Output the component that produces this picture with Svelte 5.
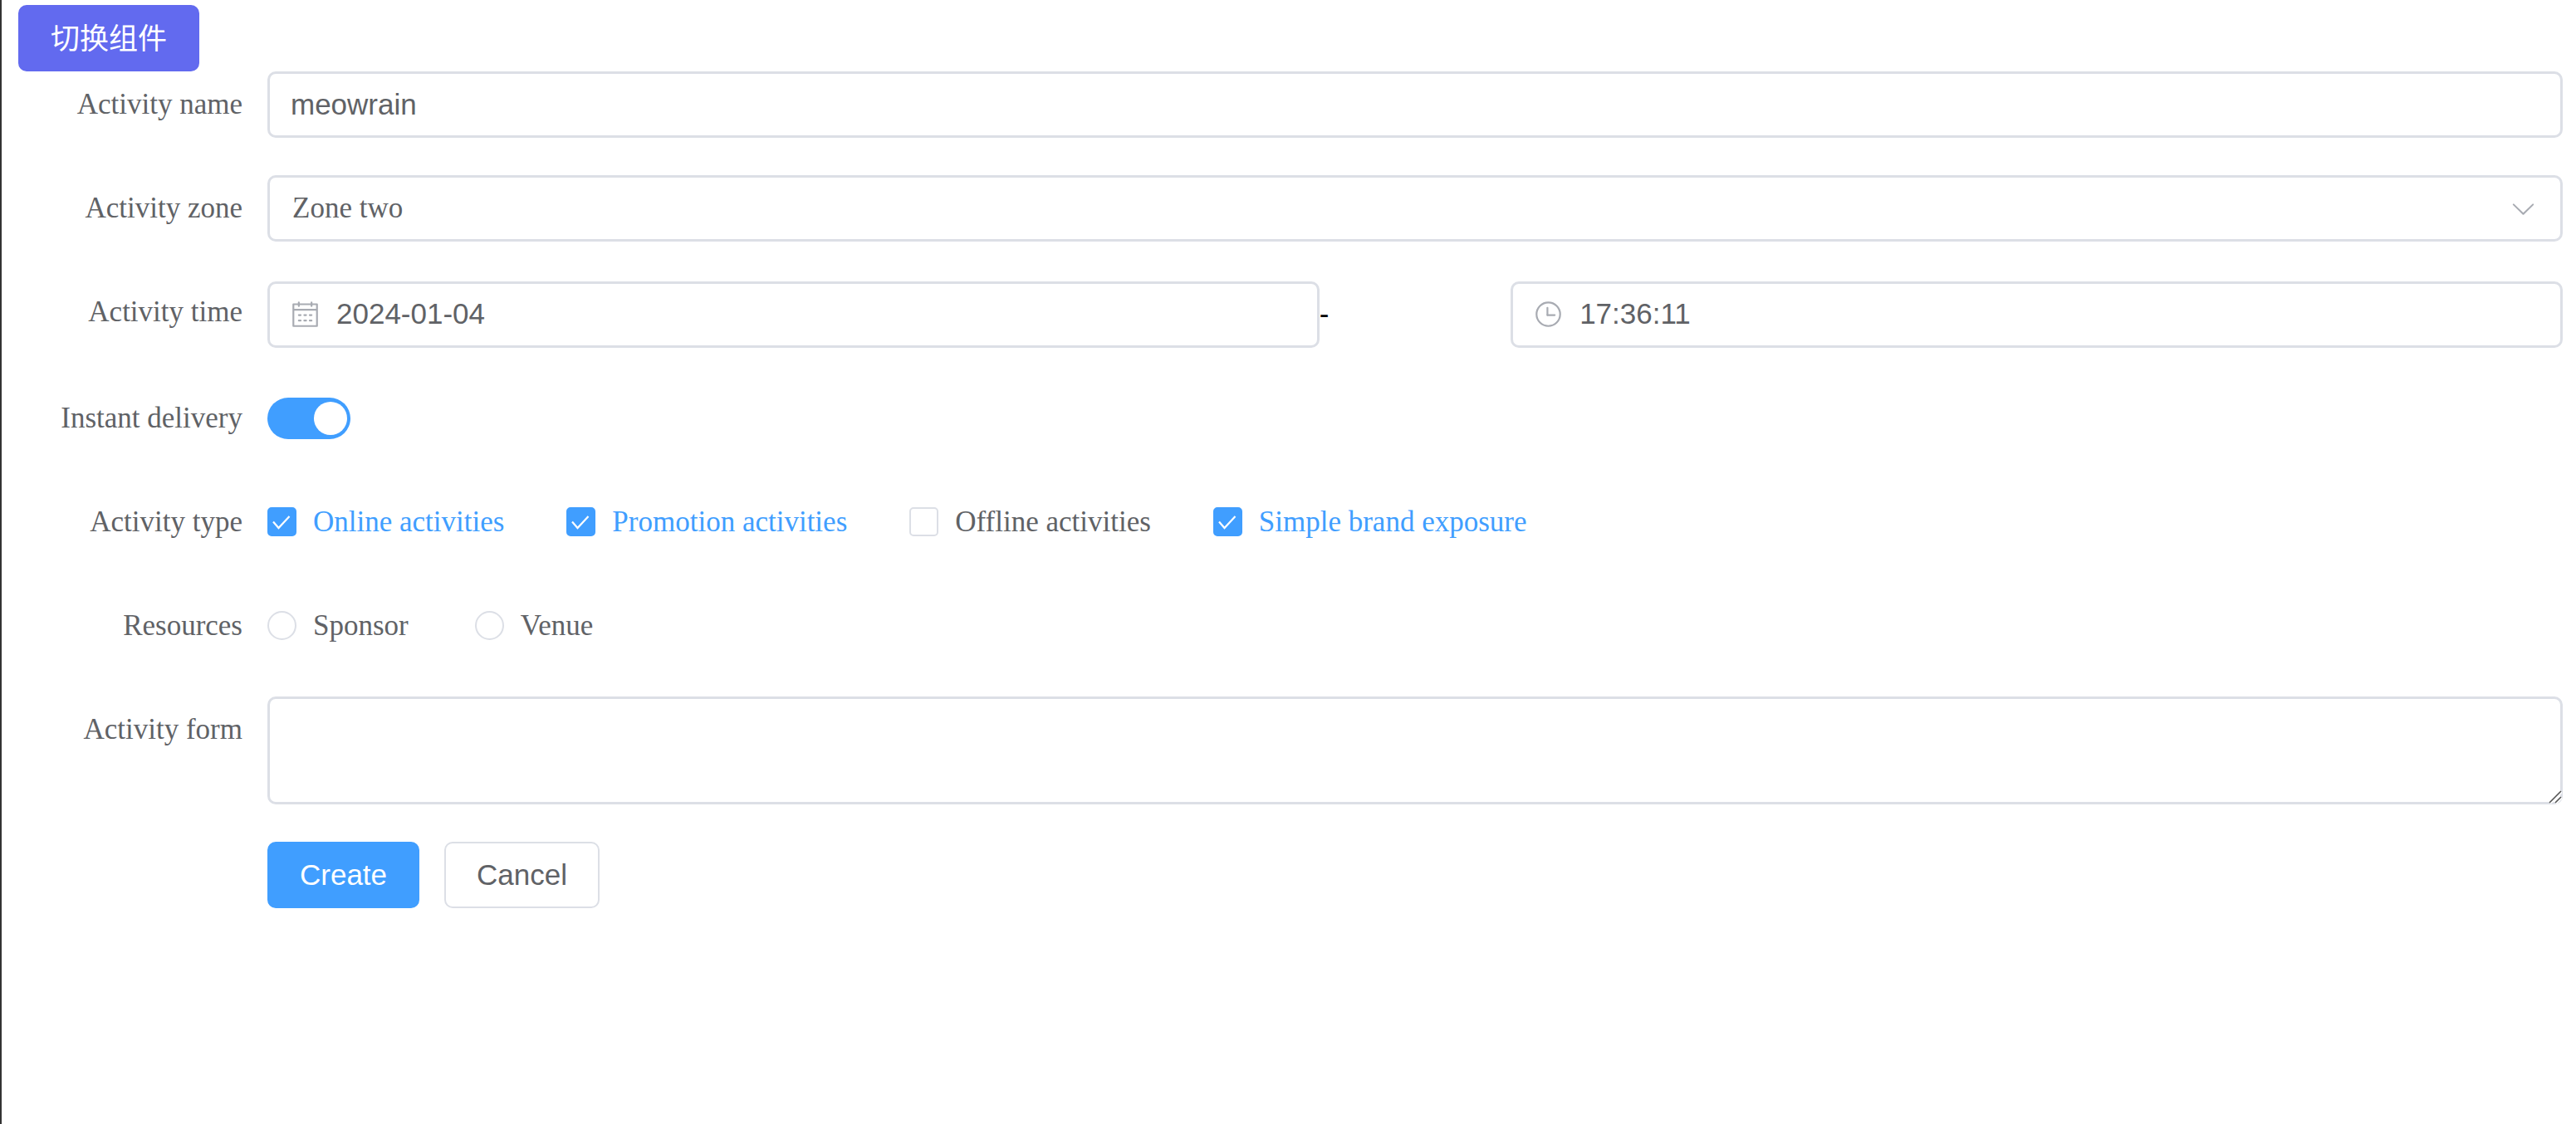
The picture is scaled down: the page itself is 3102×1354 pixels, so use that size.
<script>
  let name = $state('meowrain');
  let zone = $state('two');
  let date = $state('2024-01-04');
  let time = $state('17:36:11');
  let instant = $state(true);
  let resource = $state('');
  let description = $state('');
  let types = $state([
    { label: 'Online activities', checked: true },
    { label: 'Promotion activities', checked: true },
    { label: 'Offline activities', checked: false },
    { label: 'Simple brand exposure', checked: true },
  ]);
  const resources = ['Sponsor', 'Venue'];
</script>

<main class="page">
  <div class="toolbar">
    <button type="button" class="btn switcher">切换组件</button>
  </div>

  <form class="form" onsubmit={(e) => e.preventDefault()}>
    <div class="item">
      <label class="label" for="name">Activity name</label>
      <div class="box">
        <input id="name" class="text" type="text" bind:value={name} />
      </div>
    </div>

    <div class="item">
      <label class="label" for="zone">Activity zone</label>
      <div class="box">
        <select id="zone" class="text select" bind:value={zone}>
          <option value="one">Zone one</option>
          <option value="two">Zone two</option>
        </select>
        <svg class="icon arrow" viewBox="0 0 1024 1024" aria-hidden="true">
          <path d="M831.872 340.864 512 652.672 192.128 340.864a30.592 30.592 0 0 0-42.752 0 29.12 29.12 0 0 0 0 41.6L489.664 714.24a32 32 0 0 0 44.672 0l340.288-331.712a29.12 29.12 0 0 0 0-41.728 30.592 30.592 0 0 0-42.752 0z" />
        </svg>
      </div>
    </div>

    <div class="item">
      <label class="label" for="date">Activity time</label>
      <div class="range">
        <div class="box">
          <svg class="icon" viewBox="0 0 1024 1024" aria-hidden="true">
            <path d="M128 384v512h768V192H768v32a32 32 0 1 1-64 0v-32H320v32a32 32 0 0 1-64 0v-32H128v128h768v64zm192-256h384V96a32 32 0 1 1 64 0v32h160a32 32 0 0 1 32 32v768a32 32 0 0 1-32 32H96a32 32 0 0 1-32-32V160a32 32 0 0 1 32-32h160V96a32 32 0 0 1 64 0zm-32 384h64a32 32 0 0 1 0 64h-64a32 32 0 0 1 0-64m0 192h64a32 32 0 1 1 0 64h-64a32 32 0 1 1 0-64m192-192h64a32 32 0 0 1 0 64h-64a32 32 0 0 1 0-64m0 192h64a32 32 0 1 1 0 64h-64a32 32 0 1 1 0-64m192-192h64a32 32 0 1 1 0 64h-64a32 32 0 1 1 0-64m0 192h64a32 32 0 1 1 0 64h-64a32 32 0 1 1 0-64" />
          </svg>
          <input id="date" class="text" type="text" bind:value={date} />
        </div>
        <span class="dash">-</span>
        <div class="box">
          <svg class="icon" viewBox="0 0 1024 1024" aria-hidden="true">
            <path d="M512 896a384 384 0 1 0 0-768 384 384 0 0 0 0 768m0 64a448 448 0 1 1 0-896 448 448 0 0 1 0 896" />
            <path d="M480 256a32 32 0 0 1 32 32v256a32 32 0 0 1-64 0V288a32 32 0 0 1 32-32" />
            <path d="M480 512h256q32 0 32 32t-32 32H480q-32 0-32-32t32-32" />
          </svg>
          <input class="text" type="text" aria-label="Time" bind:value={time} />
        </div>
      </div>
    </div>

    <div class="item">
      <label class="label" for="instant">Instant delivery</label>
      <div class="line">
        <input id="instant" class="switch" type="checkbox" role="switch" bind:checked={instant} />
      </div>
    </div>

    <div class="item" role="group" aria-labelledby="type-label">
      <span class="label" id="type-label">Activity type</span>
      <div class="line checks">
        {#each types as type}
          <label class="option" class:on={type.checked}>
            <span class="tick">
              <input class="check" type="checkbox" bind:checked={type.checked} />
              {#if type.checked}
                <svg class="mark" viewBox="0 0 35 35" aria-hidden="true">
                  <path d="M7 17.5 13.5 25 26.5 11" />
                </svg>
              {/if}
            </span>
            {type.label}
          </label>
        {/each}
      </div>
    </div>

    <div class="item" role="radiogroup" aria-labelledby="resource-label">
      <span class="label" id="resource-label">Resources</span>
      <div class="line radios">
        {#each resources as item}
          <label class="option">
            <span class="tick">
              <input class="radio" type="radio" name="resource" value={item} bind:group={resource} />
            </span>
            {item}
          </label>
        {/each}
      </div>
    </div>

    <div class="item">
      <label class="label" for="description">Activity form</label>
      <div class="area">
        <textarea id="description" bind:value={description}></textarea>
        <svg class="grip" viewBox="0 0 16 16" aria-hidden="true">
          <path class="halo" d="M1 15 15 1M8 15 15 8" />
          <path d="M1 15 15 1M8 15 15 8" />
        </svg>
      </div>
    </div>

    <div class="actions">
      <button type="submit" class="btn primary">Create</button>
      <button type="button" class="btn">Cancel</button>
    </div>
  </form>
</main>

<style>
  :global(body) {
    margin: 0;
    background: #fff;
  }

  .page {
    box-sizing: border-box;
    min-height: 100vh;
    padding: 6px 16px 0 20px;
    border-left: 2px solid #333;
    color: #606266;
    font: 35px/80px 'Liberation Serif', 'Noto Sans CJK SC', serif;
  }

  .toolbar {
    display: flex;
  }

  .btn {
    box-sizing: border-box;
    height: 80px;
    padding: 0 37px 2px;
    border: 2px solid #dcdfe6;
    border-radius: 10px;
    background: #fff;
    color: #606266;
    font: 35px/1 'Liberation Sans', 'Noto Sans CJK SC', sans-serif;
    cursor: pointer;
  }

  .switcher {
    padding-bottom: 0;
    border-color: #626aef;
    background: #626aef;
    color: #fff;
  }

  .primary {
    border-color: #409eff;
    background: #409eff;
    color: #fff;
  }

  .form {
    display: flex;
    flex-direction: column;
    gap: 45px;
  }

  .item {
    display: grid;
    grid-template-columns: 270px minmax(0, 1fr);
    column-gap: 30px;
    align-items: start;
  }

  .label {
    text-align: right;
    white-space: nowrap;
  }

  .box {
    box-sizing: border-box;
    display: flex;
    align-items: center;
    gap: 20px;
    height: 80px;
    padding: 0 25px;
    border: 3px solid #dcdfe6;
    border-radius: 10px;
    background: #fff;
  }

  .text {
    flex: 1;
    min-width: 0;
    height: 72px;
    padding: 0;
    border: 0;
    outline: 0;
    background: transparent;
    color: #606266;
    font: 35px/72px 'Liberation Sans', sans-serif;
  }

  .select {
    padding-left: 2px;
    appearance: none;
    font-family: 'Liberation Serif', serif;
  }

  .icon {
    flex: none;
    width: 35px;
    height: 35px;
    fill: #a8abb2;
  }

  .arrow {
    margin-right: 2px;
    pointer-events: none;
  }

  .range {
    display: grid;
    grid-template-columns: 11fr 2fr 11fr;
    padding-top: 3px;
  }

  .range .box {
    padding-bottom: 2px;
  }

  .dash {
    color: #000;
    font-family: 'Liberation Sans', sans-serif;
    line-height: 78px;
  }

  .line {
    display: flex;
    align-items: center;
    height: 80px;
  }

  .checks {
    gap: 75px;
  }

  .radios {
    gap: 80px;
  }

  .option {
    display: flex;
    align-items: center;
    gap: 20px;
    white-space: nowrap;
    cursor: pointer;
  }

  .on {
    color: #409eff;
  }

  .switch {
    box-sizing: border-box;
    display: flex;
    align-items: center;
    width: 100px;
    height: 50px;
    margin: 0;
    padding: 0 4px;
    border-radius: 25px;
    background: #dcdfe6;
    appearance: none;
    cursor: pointer;
  }

  .switch::before {
    content: '';
    width: 40px;
    height: 40px;
    border-radius: 50%;
    background: #fff;
  }

  .switch:checked {
    justify-content: flex-end;
    background: #409eff;
  }

  .tick {
    position: relative;
    display: flex;
    margin-bottom: 1px;
  }

  .check,
  .radio {
    box-sizing: border-box;
    width: 35px;
    height: 35px;
    margin: 0;
    border: 2px solid #dcdfe6;
    border-radius: 5px;
    background: #fff;
    appearance: none;
    cursor: pointer;
  }

  .radio {
    border-radius: 50%;
  }

  .radio:checked {
    border: 12px solid #409eff;
  }

  .check:checked {
    border-color: #409eff;
    background: #409eff;
  }

  .mark {
    position: absolute;
    inset: 0;
    fill: none;
    stroke: #fff;
    stroke-width: 2.2;
    pointer-events: none;
  }

  .area {
    position: relative;
    display: flex;
  }

  textarea {
    box-sizing: border-box;
    width: 100%;
    height: 130px;
    padding: 12px 27px;
    border: 3px solid #dcdfe6;
    border-radius: 10px;
    outline: 0;
    background: #fff;
    color: #606266;
    font: 35px/52px 'Liberation Sans', sans-serif;
    resize: none;
  }

  .grip {
    position: absolute;
    right: 1px;
    bottom: 1px;
    width: 16px;
    height: 16px;
    fill: none;
    stroke: #555;
    stroke-width: 1.6;
    pointer-events: none;
  }

  .halo {
    stroke: #fff;
    stroke-width: 5;
  }

  .actions {
    display: flex;
    gap: 30px;
    padding-left: 300px;
  }
</style>
